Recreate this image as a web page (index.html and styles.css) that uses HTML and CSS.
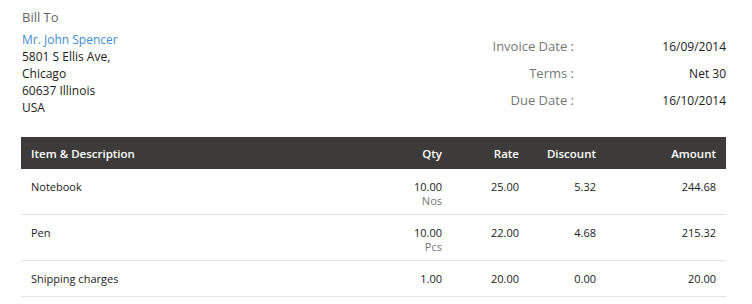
FILE: index.html
```html
<!DOCTYPE html>
<html>
<head>
<meta charset="utf-8">
<link rel="stylesheet" href="styles.css">
</head>
<body>
<div class="page">
  <div class="top">
    <div class="billto">
      <div class="billto-title">Bill To</div>
      <div class="addr">
        <div class="name">Mr. John Spencer</div>
        <div>5801 S Ellis Ave,</div>
        <div>Chicago</div>
        <div>60637 Illinois</div>
        <div>USA</div>
      </div>
    </div>
    <div class="meta">
      <div class="meta-row"><span class="meta-label">Invoice Date :</span><span class="meta-value">16/09/2014</span></div>
      <div class="meta-row"><span class="meta-label">Terms :</span><span class="meta-value">Net 30</span></div>
      <div class="meta-row"><span class="meta-label">Due Date :</span><span class="meta-value">16/10/2014</span></div>
    </div>
  </div>
  <table class="items">
    <thead>
      <tr>
        <th class="c-item">Item &amp; Description</th>
        <th class="c-num c-qty">Qty</th>
        <th class="c-num c-rate">Rate</th>
        <th class="c-num c-disc">Discount</th>
        <th class="c-num c-amt">Amount</th>
      </tr>
    </thead>
    <tbody>
      <tr>
        <td class="c-item">Notebook</td>
        <td class="c-num"><div>10.00</div><div class="unit">Nos</div></td>
        <td class="c-num">25.00</td>
        <td class="c-num">5.32</td>
        <td class="c-num">244.68</td>
      </tr>
      <tr>
        <td class="c-item">Pen</td>
        <td class="c-num"><div>10.00</div><div class="unit">Pcs</div></td>
        <td class="c-num">22.00</td>
        <td class="c-num">4.68</td>
        <td class="c-num">215.32</td>
      </tr>
      <tr>
        <td class="c-item">Shipping charges</td>
        <td class="c-num">1.00</td>
        <td class="c-num">20.00</td>
        <td class="c-num">0.00</td>
        <td class="c-num">20.00</td>
      </tr>
    </tbody>
  </table>
</div>
</body>
</html>
```

FILE: styles.css
```css
html, body {
  margin: 0;
  padding: 0;
  background: #fff;
}
body {
  font-family: "Open Sans", "DejaVu Sans", sans-serif;
  color: #222;
}
.page {
  padding: 8px 26px 0 21px;
}
.top {
  display: flex;
  justify-content: space-between;
  align-items: flex-start;
}
.billto {
  padding-left: 1px;
}
.billto-title {
  font-size: 13px;
  line-height: 18px;
  color: #666;
}
.addr {
  margin-top: 5px;
  font-size: 12px;
  line-height: 17px;
  color: #222;
}
.name {
  color: #408dd0;
}
.meta {
  margin-top: 29px;
  display: flex;
  flex-direction: column;
  gap: 8px;
}
.meta-row {
  display: flex;
  align-items: baseline;
  line-height: 18px;
}
.meta-label {
  width: 152px;
  text-align: right;
  font-size: 13px;
  color: #777;
}
.meta-value {
  width: 152px;
  text-align: right;
  font-size: 12px;
  color: #222;
}
.items {
  margin-top: 21px;
  width: 100%;
  border-collapse: collapse;
  font-size: 11px;
}
.items th {
  background: #3c3b39;
  color: #fff;
  font-weight: 600;
  font-size: 11.5px;
  height: 32px;
  padding: 0 10px;
  text-align: left;
}
.items td {
  padding: 10px 10px 10px;
  line-height: 15px;
  vertical-align: top;
  border-bottom: 1px solid #e3e3e3;
  color: #222;
}
.items .c-num {
  text-align: right;
}
.items .c-qty,
.items .c-rate,
.items .c-disc {
  width: 57px;
}
.items .c-amt {
  width: 100px;
}
.unit {
  color: #777;
  font-size: 11px;
  line-height: 14px;
  margin-bottom: -4px;
}
```
